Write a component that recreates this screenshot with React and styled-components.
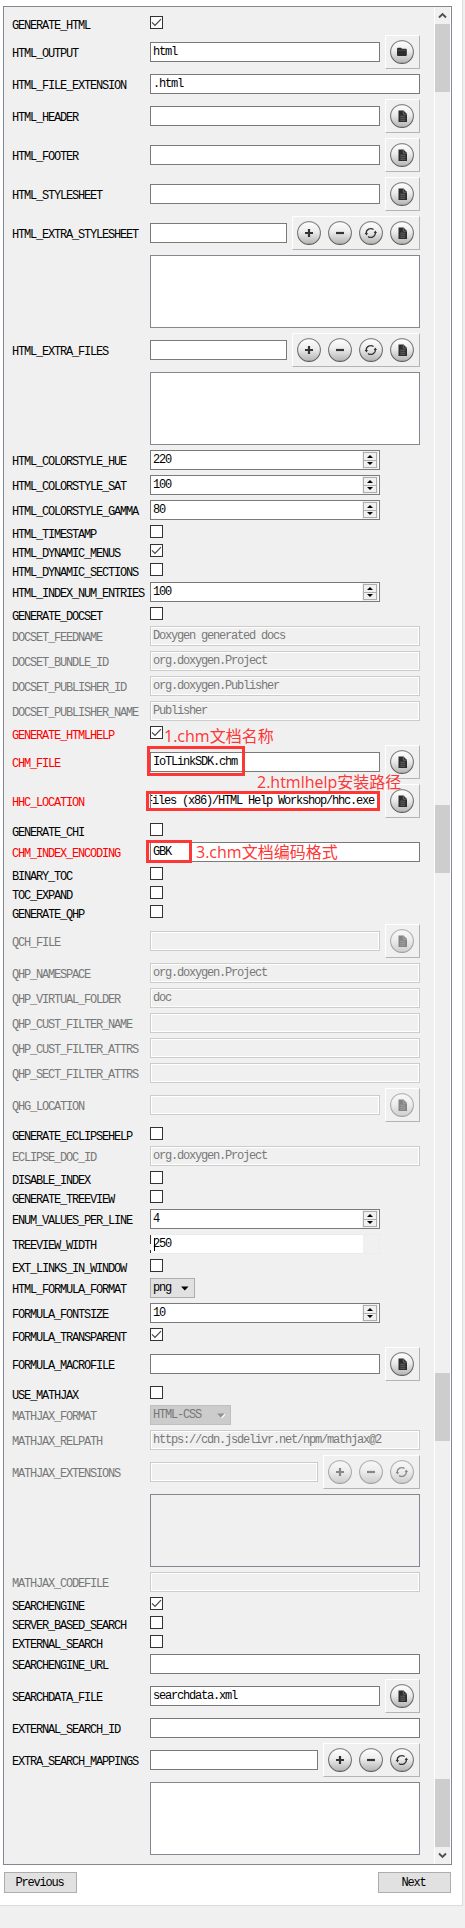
import React from "react";
import styled, { createGlobalStyle, css } from "styled-components";

const GlobalStyle = createGlobalStyle`
  * { box-sizing: border-box; }
  html, body { margin: 0; background: #f0f0f0; }
`;

const mono = css`
  font-family: "Liberation Mono", "Noto Sans CJK SC", monospace;
  font-size: 12px;
  letter-spacing: -1.2px;
  white-space: pre;
`;

const Page = styled.div`
  width: 465px;
  height: 1928px;
  overflow: hidden;
  background: #f0f0f0;
`;
const Sheet = styled.main`
  width: 463px;
  height: 1906px;
  padding: 6px 11px 0 3px;
  background: #fff;
  border-right: 1px solid #dcdcdc;
  border-bottom: 1px solid #dcdcdc;
`;
const Panel = styled.section`
  display: flex;
  height: 1859px;
  width: 449px;
  border: 1px solid #828790;
  background: #f0f0f0;
`;
const Form = styled.div`
  flex: 1;
  display: flex;
  flex-direction: column;
  gap: 5px;
  padding: 9px 14px 0 8px;
`;
const Row = styled.div`
  display: grid;
  grid-template-columns: 138px 270px;
  align-items: center;
  height: ${(p) => p.$h}px;
`;
const Label = styled.label`
  ${mono}
  line-height: 14px;
  padding-top: 3px;
  color: ${(p) => (p.$tone === "off" ? "#787878" : p.$tone === "red" ? "#ff0000" : "#000")};
`;
const Control = styled.div`
  position: relative;
  display: flex;
  align-items: center;
  gap: 5px;
  height: 100%;
`;
const Field = styled.div`
  ${mono}
  display: flex;
  align-items: center;
  justify-content: ${(p) => (p.$end ? "flex-end" : "flex-start")};
  flex: 1;
  height: 20px;
  padding: 0 ${(p) => (p.$end ? 5 : 2)}px 0 2px;
  overflow: hidden;
  color: ${(p) => (p.$off ? "#787878" : "#000")};
  background: ${(p) => (p.$off ? "#f0f0f0" : "#fff")};
  border: 1px solid ${(p) => (p.$off ? "#cccccc" : "#7a7a7a")};
  box-shadow: ${(p) => (p.$off ? "inset 0 0 0 1px #fff" : "none")};
`;
const ListBox = styled.div`
  flex: 1;
  height: 73px;
  border: 1px solid #828790;
  background: ${(p) => (p.$off ? "#f0f0f0" : "#fff")};
`;
const CheckBox = styled.span`
  display: flex;
  align-self: flex-start;
  width: 13px;
  height: 13px;
  border: 1px solid #333;
  background: #fff;
`;
const SpinField = styled(Field)`
  flex: 0 0 230px;
  padding-right: 1px;
`;
const SpinText = styled.span`
  flex: 1;
`;
const SpinButtons = styled.span`
  display: flex;
  flex-direction: column;
  width: 16px;
  height: 18px;
  padding: 1px;
  background: #f0f0f0;
`;
const SpinButton = styled.span`
  display: flex;
  align-items: center;
  justify-content: center;
  height: ${(p) => (p.$down ? 8 : 9)}px;
  width: 14px;
  border: 1px solid #adadad;
  ${(p) => p.$down && "border-top: 0;"}
`;
const ActiveField = styled.div`
  ${mono}
  display: flex;
  align-items: center;
  width: 230px;
  height: 20px;
  padding-left: 1px;
  border: 1px solid #ececec;
  border-left: 0;
  background: linear-gradient(#333 0 9px, #f0f0f0 9px 15px, #333 15px) left top / 1px 100% no-repeat;
`;
const ActiveText = styled.span`
  display: flex;
  align-items: center;
  width: 212px;
  height: 18px;
  padding-left: 3px;
  background: #fff;
`;
const Caret = styled.i`
  width: 1px;
  height: 13px;
  margin-right: -2px;
  background: #000;
`;
const Select = styled.div`
  ${mono}
  display: flex;
  align-items: center;
  justify-content: space-between;
  width: ${(p) => p.$w}px;
  height: 20px;
  padding: 0 5px 0 2px;
  color: ${(p) => (p.$off ? "#787878" : "#000")};
  background: ${(p) => (p.$off ? "#cccccc" : "#e1e1e1")};
  border: 1px solid ${(p) => (p.$off ? "#bfbfbf" : "#adadad")};
`;
const Toolbar = styled.div`
  display: flex;
  gap: 7px;
  height: 34px;
  padding: 4px 5px 0 4px;
  border: 1px solid #b4b4b4;
  border-top-color: #fff;
  border-left-color: #fff;
`;
const IconSvg = styled.svg`
  display: block;
  width: 24px;
  height: 24px;
  opacity: ${(p) => (p.$off ? 0.55 : 1)};
`;
const Glyph = styled.svg`
  display: block;
`;
const Scrollbar = styled.div`
  display: flex;
  flex-direction: column;
  width: 17px;
  border-left: 1px solid #fff;
  border-right: 1px solid #fff;
`;
const Thumb = styled.div`
  height: 68px;
  margin-top: ${(p) => p.$gap}px;
  background: #cdcdcd;
`;
const ScrollArrow = styled.div`
  display: flex;
  align-items: center;
  justify-content: center;
  height: 17px;
`;
const Mark = styled.div`
  position: absolute;
  left: ${(p) => p.$x}px;
  top: ${(p) => p.$y}px;
  width: ${(p) => p.$w}px;
  height: ${(p) => p.$h}px;
  border: 3px solid #fd3636;
  z-index: 1;
`;
const Note = styled.div`
  position: absolute;
  left: ${(p) => p.$x}px;
  top: ${(p) => p.$y}px;
  font-family: "Open Sans", "Noto Sans CJK SC", sans-serif;
  font-size: 16px;
  line-height: 22px;
  letter-spacing: ${(p) => p.$ls || 0}px;
  white-space: nowrap;
  color: #fd3636;
  z-index: 2;
`;
const Footer = styled.footer`
  display: flex;
  justify-content: space-between;
  width: 447px;
  margin: 7px 0 0 1px;
`;
const Button = styled.button`
  ${mono}
  width: 73px;
  height: 21px;
  padding: 1px 2px 0 0;
  color: #000;
  background: #e1e1e1;
  border: 1px solid #adadad;
`;

const glyphs = {
  file: (
    <g>
      <path d="M8.5 6.5h5L17 10v8H8.5z" fill="#2d2d2d" />
      <path d="M13.3 6.6V10.2H17M10.3 12.2h5M10.3 14.2h5M10.3 16.2h5" stroke="#777" strokeWidth=".8" fill="none" />
    </g>
  ),
  folder: (
    <g>
      <path d="M7 8.8q0-1.1 1-1.1h3l1 1.1h3.8q1 0 1 1V15q0 1-1 1H8q-1 0-1-1z" fill="#2d2d2d" />
      <path d="M7.4 10.2h9" stroke="#6a6a6a" strokeWidth=".6" />
    </g>
  ),
  add: <path d="M12 8v8M8 12h8" stroke="#333" strokeWidth="2.2" />,
  remove: <path d="M8 12h8" stroke="#333" strokeWidth="2.2" />,
  refresh: (
    <g fill="none" stroke="#333" strokeWidth="1.3">
      <path d="M7.2 12.6a4.6 4.6 0 0 1 7.4-4M16.4 11.4a4.6 4.6 0 0 1-7.4 4" />
      <path d="M5.6 12h3.4l-1.5 2.4zM14.7 12h3.4l-1.9-2.4z" fill="#333" stroke="none" />
    </g>
  ),
};

const ToolIcon = ({ name, off }) => (
  <IconSvg viewBox="0 0 24 24" $off={off}>
    <defs>
      <linearGradient id="knob" x1="0" y1="0" x2="0" y2="1">
        <stop offset="0" stopColor="#ffffff" />
        <stop offset=".45" stopColor="#ececec" />
        <stop offset="1" stopColor="#b2b2b2" />
      </linearGradient>
      <linearGradient id="rim" x1="0" y1="0" x2="0" y2="1">
        <stop offset="0" stopColor="#8c8c8c" />
        <stop offset="1" stopColor="#5c5c5c" />
      </linearGradient>
    </defs>
    <circle cx="12" cy="12" r="11.4" fill="url(#knob)" stroke="url(#rim)" strokeWidth="1.1" />
    {glyphs[name]}
  </IconSvg>
);

const Check = () => (
  <Glyph width="11" height="11" viewBox="0 0 11 11">
    <path d="M1 5.4l3 3 6-6.2" fill="none" stroke="#444" strokeWidth="1.2" />
  </Glyph>
);
const Triangle = ({ up }) => (
  <Glyph width="6" height="3" viewBox="0 0 6 3">
    <path d={up ? "M0 3L3 0l3 3z" : "M0 0h6L3 3z"} fill="#000" />
  </Glyph>
);
const DropArrow = ({ off }) => (
  <Glyph width="8" height="5" viewBox="0 0 8 5">
    {off && <path d="M8 1L4.6 5" stroke="#fff" strokeWidth="1.2" />}
    <path d="M0 .5h7.5L3.8 4.5z" fill={off ? "#909090" : "#000"} />
  </Glyph>
);
const Chevron = ({ down }) => (
  <Glyph width="9" height="7" viewBox="0 0 9 7">
    <path d={down ? "M1 1.5l3.5 3.5L8 1.5" : "M1 5.5L4.5 2 8 5.5"} fill="none" stroke="#505050" strokeWidth="1.9" />
  </Glyph>
);

const rows = [
  ["GENERATE_HTML", "check", { on: true }],
  ["HTML_OUTPUT", "tool", { value: "html", tools: ["folder"] }],
  ["HTML_FILE_EXTENSION", "text", { value: ".html" }],
  ["HTML_HEADER", "tool", { tools: ["file"] }],
  ["HTML_FOOTER", "tool", { tools: ["file"] }],
  ["HTML_STYLESHEET", "tool", { tools: ["file"] }],
  ["HTML_EXTRA_STYLESHEET", "tool", { tools: ["add", "remove", "refresh", "file"] }],
  ["", "list", {}],
  ["HTML_EXTRA_FILES", "tool", { tools: ["add", "remove", "refresh", "file"] }],
  ["", "list", {}],
  ["HTML_COLORSTYLE_HUE", "spin", { value: "220" }],
  ["HTML_COLORSTYLE_SAT", "spin", { value: "100" }],
  ["HTML_COLORSTYLE_GAMMA", "spin", { value: "80" }],
  ["HTML_TIMESTAMP", "check", {}],
  ["HTML_DYNAMIC_MENUS", "check", { on: true }],
  ["HTML_DYNAMIC_SECTIONS", "check", {}],
  ["HTML_INDEX_NUM_ENTRIES", "spin", { value: "100" }],
  ["GENERATE_DOCSET", "check", {}],
  ["DOCSET_FEEDNAME", "text", { value: "Doxygen generated docs", off: true }],
  ["DOCSET_BUNDLE_ID", "text", { value: "org.doxygen.Project", off: true }],
  ["DOCSET_PUBLISHER_ID", "text", { value: "org.doxygen.Publisher", off: true }],
  ["DOCSET_PUBLISHER_NAME", "text", { value: "Publisher", off: true }],
  ["GENERATE_HTMLHELP", "check", { on: true, red: true, note: { text: "1.chm文档名称", x: 14, y: -1 } }],
  ["CHM_FILE", "tool", { value: "IoTLinkSDK.chm", tools: ["file"], red: true, mark: { x: -3, y: 1, w: 98, h: 30 } }],
  ["HHC_LOCATION", "tool", {
    value: "Files (x86)/HTML Help Workshop/hhc.exe", end: true, tools: ["file"], red: true,
    mark: { x: -4, y: 7, w: 234, h: 20 }, note: { text: "2.htmlhelp安装路径", x: 107, y: -13 },
  }],
  ["GENERATE_CHI", "check", {}],
  ["CHM_INDEX_ENCODING", "text", {
    value: "GBK", red: true, mark: { x: -4, y: -2, w: 46, h: 23 }, note: { text: "3.chm文档编码格式", x: 46, y: -1 },
  }],
  ["BINARY_TOC", "check", {}],
  ["TOC_EXPAND", "check", {}],
  ["GENERATE_QHP", "check", {}],
  ["QCH_FILE", "tool", { tools: ["file"], off: true }],
  ["QHP_NAMESPACE", "text", { value: "org.doxygen.Project", off: true }],
  ["QHP_VIRTUAL_FOLDER", "text", { value: "doc", off: true }],
  ["QHP_CUST_FILTER_NAME", "text", { off: true }],
  ["QHP_CUST_FILTER_ATTRS", "text", { off: true }],
  ["QHP_SECT_FILTER_ATTRS", "text", { off: true }],
  ["QHG_LOCATION", "tool", { tools: ["file"], off: true }],
  ["GENERATE_ECLIPSEHELP", "check", {}],
  ["ECLIPSE_DOC_ID", "text", { value: "org.doxygen.Project", off: true }],
  ["DISABLE_INDEX", "check", {}],
  ["GENERATE_TREEVIEW", "check", {}],
  ["ENUM_VALUES_PER_LINE", "spin", { value: "4" }],
  ["TREEVIEW_WIDTH", "active", { value: "250" }],
  ["EXT_LINKS_IN_WINDOW", "check", {}],
  ["HTML_FORMULA_FORMAT", "select", { value: "png", w: 45 }],
  ["FORMULA_FONTSIZE", "spin", { value: "10" }],
  ["FORMULA_TRANSPARENT", "check", { on: true }],
  ["FORMULA_MACROFILE", "tool", { tools: ["file"] }],
  ["USE_MATHJAX", "check", {}],
  ["MATHJAX_FORMAT", "select", { value: "HTML-CSS", w: 81, off: true }],
  ["MATHJAX_RELPATH", "text", { value: "https://cdn.jsdelivr.net/npm/mathjax@2", off: true }],
  ["MATHJAX_EXTENSIONS", "tool", { tools: ["add", "remove", "refresh"], off: true }],
  ["", "list", { off: true }],
  ["MATHJAX_CODEFILE", "text", { off: true }],
  ["SEARCHENGINE", "check", { on: true }],
  ["SERVER_BASED_SEARCH", "check", {}],
  ["EXTERNAL_SEARCH", "check", {}],
  ["SEARCHENGINE_URL", "text", {}],
  ["SEARCHDATA_FILE", "tool", { value: "searchdata.xml", tools: ["file"] }],
  ["EXTERNAL_SEARCH_ID", "text", {}],
  ["EXTRA_SEARCH_MAPPINGS", "tool", { tools: ["add", "remove", "refresh"] }],
  ["", "list", {}],
];

const heights = { check: 14, text: 20, spin: 20, active: 20, select: 20, tool: 34, list: 73 };

function Editor({ kind, o }) {
  switch (kind) {
    case "check":
      return <CheckBox>{o.on && <Check />}</CheckBox>;
    case "text":
      return <Field $off={o.off}>{o.value}</Field>;
    case "list":
      return <ListBox $off={o.off} />;
    case "select":
      return (
        <Select $w={o.w} $off={o.off}>
          {o.value}
          <DropArrow off={o.off} />
        </Select>
      );
    case "spin":
      return (
        <SpinField>
          <SpinText>{o.value}</SpinText>
          <SpinButtons>
            <SpinButton><Triangle up /></SpinButton>
            <SpinButton $down><Triangle /></SpinButton>
          </SpinButtons>
        </SpinField>
      );
    case "active":
      return (
        <ActiveField>
          <ActiveText><Caret />{o.value}</ActiveText>
        </ActiveField>
      );
    default:
      return (
        <>
          <Field $off={o.off} $end={o.end}>{o.value}</Field>
          <Toolbar>
            {o.tools.map((t) => <ToolIcon key={t} name={t} off={o.off} />)}
          </Toolbar>
        </>
      );
  }
}

export default function App() {
  return (
    <Page>
      <GlobalStyle />
      <Sheet>
        <Panel>
          <Form>
            {rows.map(([name, kind, o], i) => (
              <Row key={i} $h={heights[kind]}>
                <Label $tone={o.off ? "off" : o.red ? "red" : "on"}>{name}</Label>
                <Control>
                  <Editor kind={kind} o={o} />
                  {o.mark && <Mark $x={o.mark.x} $y={o.mark.y} $w={o.mark.w} $h={o.mark.h} />}
                  {o.note && <Note $x={o.note.x} $y={o.note.y}>{o.note.text}</Note>}
                </Control>
              </Row>
            ))}
          </Form>
          <Scrollbar>
            <ScrollArrow><Chevron /></ScrollArrow>
            <Thumb $gap={0} />
            <Thumb $gap={713} />
            <Thumb $gap={500} />
            <Thumb $gap={338} />
            <ScrollArrow><Chevron down /></ScrollArrow>
          </Scrollbar>
        </Panel>
        <Footer>
          <Button>Previous</Button>
          <Button>Next</Button>
        </Footer>
      </Sheet>
    </Page>
  );
}
